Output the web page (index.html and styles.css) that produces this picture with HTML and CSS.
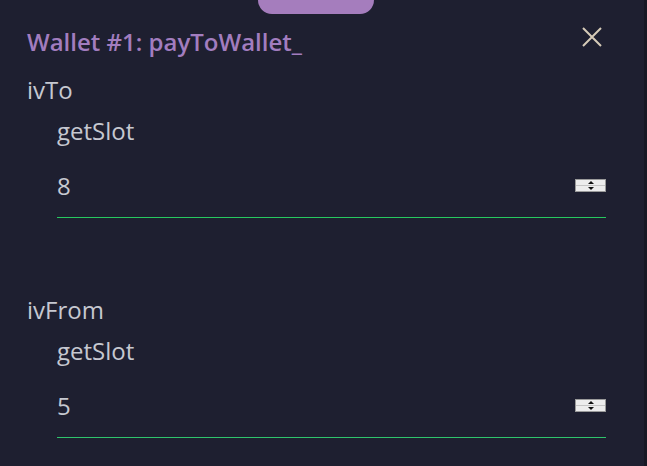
FILE: index.html
```html
<!DOCTYPE html>
<html>
<head>
<meta charset="utf-8">
<link rel="stylesheet" href="styles.css">
</head>
<body>
<div class="page">
  <div class="main">
    <div class="tab"></div>
    <div class="header">
      <div class="title">Wallet #1: payToWallet_</div>
      <button class="close" aria-label="Close">
        <svg width="22" height="22" viewBox="0 0 22 22"><path d="M2 2 L20 20 M20 2 L2 20" stroke="#d6cbb8" stroke-width="2" fill="none"/></svg>
      </button>
    </div>
    <div class="field">
      <div class="label">ivTo</div>
      <div class="sub">
        <div class="sublabel">getSlot</div>
        <div class="input active">
          <span class="value">8</span>
          <span class="spin"><span class="half"><span class="up"></span></span><span class="half"><span class="down"></span></span></span>
        </div>
      </div>
    </div>
    <div class="field second">
      <div class="label">ivFrom</div>
      <div class="sub">
        <div class="sublabel">getSlot</div>
        <div class="input">
          <span class="value">5</span>
          <span class="spin"><span class="half"><span class="up"></span></span><span class="half"><span class="down"></span></span></span>
        </div>
      </div>
    </div>
  </div>
  <div class="strip"></div>
</div>
</body>
</html>
```
FILE: styles.css
```css
html, body {
  margin: 0;
  padding: 0;
  background: #1e1f30;
  height: 100%;
}
.page {
  display: flex;
  height: 466px;
  overflow: hidden;
  font-family: "Open Sans", "Noto Sans", sans-serif;
  color: #c6c8d0;
}
.main {
  flex: 1;
  padding: 0 38px 0 27px;
}
.strip {
  width: 3px;
  background: #171824;
}
.tab {
  width: 116px;
  height: 14px;
  margin-left: 231px;
  background: #a57dbd;
  border-radius: 0 0 16px 16px;
}
.header {
  display: flex;
  justify-content: space-between;
  align-items: center;
  margin-top: 13px;
  height: 30px;
}
.title {
  font-size: 24px;
  line-height: 30px;
  font-weight: 600;
  color: #a27dbf;
}
.close {
  background: none;
  border: 0;
  padding: 0;
  width: 22px;
  height: 22px;
  margin-right: 3px;
  margin-top: -10px;
  display: flex;
}
.field {
  margin-top: 18px;
}
.field.second {
  margin-top: 77px;
}
.label, .sublabel, .value {
  font-size: 24px;
  line-height: 30px;
}
.sub {
  padding-left: 30px;
  padding-top: 11px;
}
.input {
  margin-top: 25px;
  display: flex;
  justify-content: space-between;
  align-items: center;
  padding-bottom: 16px;
  border-bottom: 1px solid #2fc46c;
}
.input.active {
  border-bottom-color: #27c85f;
}
.spin {
  width: 29px;
  height: 11px;
  border: 1px solid #9a9a9a;
  background: #ececec;
  display: flex;
  flex-direction: column;
  margin-top: -2px;
}
.half {
  flex: 1;
  display: flex;
  align-items: center;
  justify-content: center;
}
.half + .half {
  border-top: 1px solid #c4c4c4;
}
.up {
  width: 0; height: 0;
  border-left: 3.5px solid transparent;
  border-right: 3.5px solid transparent;
  border-bottom: 3.5px solid #111;
}
.down {
  width: 0; height: 0;
  border-left: 3.5px solid transparent;
  border-right: 3.5px solid transparent;
  border-top: 3.5px solid #111;
}
```
